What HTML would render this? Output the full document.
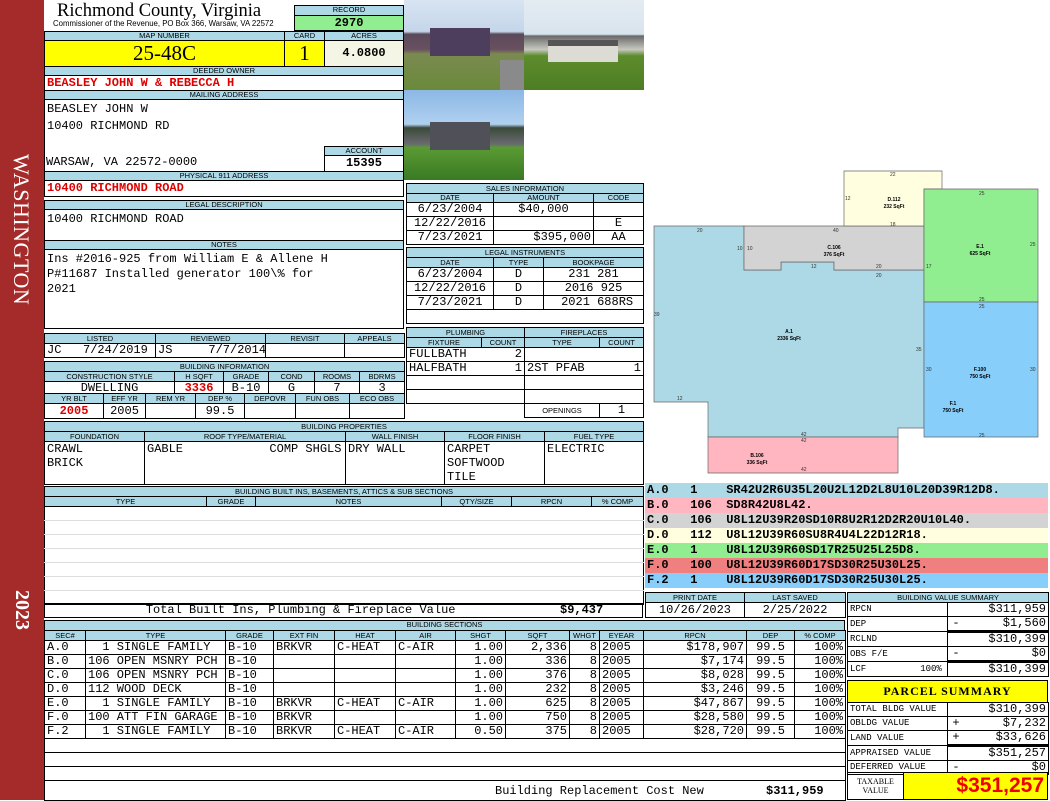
<!DOCTYPE html>
<html><head><meta charset="utf-8"><style>
*{margin:0;padding:0}
body{width:1050px;height:800px;position:relative;background:#fff;overflow:hidden;font-family:"Liberation Mono",monospace}
div,table,svg{position:absolute;box-sizing:border-box}
table{border-collapse:collapse;table-layout:fixed}
td{border:1px solid #000;padding:0 2px;overflow:hidden;white-space:pre;font:12px/13px "Liberation Mono",monospace;vertical-align:middle}
td.h,.h{background:#add8e6;font:7.5px/8px "Liberation Sans",sans-serif;text-align:center;padding:0;border:1px solid #000}
.r{text-align:right}.c{text-align:center}
.red{color:#d00;font-weight:bold}
.b{font-weight:bold}
</style></head><body>
<div style="left:0;top:0;width:44px;height:800px;background:#a52a2a"></div>
<div style="left:8px;top:154px;writing-mode:vertical-rl;font:22px 'Liberation Serif',serif;color:#fff;letter-spacing:0.5px">WASHINGTON</div>
<div style="left:10px;top:590px;writing-mode:vertical-rl;font:bold 20px 'Liberation Serif',serif;color:#fff">2023</div>

<div style="left:57px;top:1px;font:18.5px/20px 'Liberation Serif',serif">Richmond County, Virginia</div>
<div style="left:53px;top:20px;font:7.8px/8px 'Liberation Sans',sans-serif">Commissioner of the Revenue, PO Box 366, Warsaw, VA 22572</div>
<div class="h" style="left:294px;top:5px;width:110px;height:11px">RECORD</div>
<div class="b" style="left:294px;top:15px;width:110px;height:16px;background:#90ee90;border:1px solid #000;font-size:12px;text-align:center;line-height:14px">2970</div>
<div class="h" style="left:44px;top:31px;width:241px;height:10px">MAP NUMBER</div>
<div class="h" style="left:284px;top:31px;width:41px;height:10px">CARD</div>
<div class="h" style="left:324px;top:31px;width:80px;height:10px">ACRES</div>
<div style="left:44px;top:40px;width:241px;height:27px;background:#ff0;border:1px solid #000;font:21px/25px 'Liberation Serif',serif;text-align:center">25-48C</div>
<div style="left:284px;top:40px;width:41px;height:27px;background:#ff0;border:1px solid #000;font:21px/25px 'Liberation Serif',serif;text-align:center">1</div>
<div class="b" style="left:324px;top:40px;width:80px;height:27px;background:#f5f5e6;border:1px solid #000;font-size:12px;line-height:25px;text-align:center">4.0800</div>
<div class="h" style="left:44px;top:66px;width:360px;height:10px">DEEDED OWNER</div>
<div class="red" style="left:44px;top:75px;width:360px;height:16px;border:1px solid #000;font-size:12px;line-height:14px;padding-left:2px">BEASLEY JOHN W &amp; REBECCA H</div>
<div class="h" style="left:44px;top:90px;width:360px;height:10px">MAILING ADDRESS</div>
<div style="left:44px;top:99px;width:360px;height:73px;border:1px solid #000;font-size:12px;line-height:17px;padding:1px 2px;white-space:pre">BEASLEY JOHN W
10400 RICHMOND RD</div>
<div style="left:46px;top:155px;font-size:12px;line-height:14px">WARSAW, VA 22572-0000</div>
<div class="h" style="left:324px;top:146px;width:80px;height:10px">ACCOUNT</div>
<div class="b" style="left:324px;top:155px;width:80px;height:17px;border:1px solid #000;font-size:12px;line-height:15px;text-align:center">15395</div>
<div class="h" style="left:44px;top:171px;width:360px;height:10px">PHYSICAL 911 ADDRESS</div>
<div class="red" style="left:44px;top:180px;width:360px;height:17px;border:1px solid #000;font-size:12px;line-height:15px;padding-left:2px">10400 RICHMOND ROAD</div>

<div class="h" style="left:44px;top:200px;width:360px;height:10px">LEGAL DESCRIPTION</div>
<div style="left:44px;top:209px;width:360px;height:32px;border:1px solid #000;font-size:12px;line-height:15px;padding:2px">10400 RICHMOND ROAD</div>
<div class="h" style="left:44px;top:240px;width:360px;height:10px">NOTES</div>
<div style="left:44px;top:249px;width:360px;height:80px;border:1px solid #000;font-size:12px;line-height:15px;padding:2px;white-space:pre">Ins #2016-925 from William E &amp; Allene H
P#11687 Installed generator 100\% for
2021</div>

<div style="left:404px;top:0;width:120px;height:90px;background:linear-gradient(#d8e4f2 0,#c4d6ea 35%,#5a4a5a 38%,#6a5060 55%,#7a8a50 60%,#6a8a3a 100%)"></div>
<div style="left:430px;top:28px;width:60px;height:28px;background:#4e3e5e"></div>
<div style="left:500px;top:60px;width:24px;height:30px;background:#8a8a8a"></div>
<div style="left:524px;top:0;width:120px;height:90px;background:linear-gradient(#e4ecf2 0,#d8e4ee 38%,#6a6a6a 40%,#c8c8c0 55%,#5c8c2c 62%,#4e7e24 100%)"></div>
<div style="left:548px;top:40px;width:70px;height:22px;background:#dcdcd4;border-top:6px solid #555"></div>
<div style="left:404px;top:90px;width:120px;height:90px;background:linear-gradient(#8cb8e4 0,#b0d0f0 38%,#3a4a3a 42%,#6a6a70 60%,#5a9a34 64%,#3a7a24 100%)"></div>
<div style="left:430px;top:122px;width:60px;height:28px;background:#505058"></div>

<table style="left:406px;top:183px;width:237px"><colgroup><col width="87"><col width="100"><col width="50"></colgroup>
<tr style="height:10px"><td class="h" colspan="3">SALES INFORMATION</td></tr>
<tr style="height:9px"><td class="h">DATE</td><td class="h">AMOUNT</td><td class="h">CODE</td></tr>
<tr style="height:14px"><td class="c">6/23/2004</td><td class="c">$40,000</td><td></td></tr>
<tr style="height:14px"><td class="c">12/22/2016</td><td></td><td class="c">E</td></tr>
<tr style="height:14px"><td class="c">7/23/2021</td><td class="r">$395,000</td><td class="c">AA</td></tr>
</table>
<table style="left:406px;top:247px;width:237px"><colgroup><col width="87"><col width="50"><col width="100"></colgroup>
<tr style="height:10px"><td class="h" colspan="3">LEGAL INSTRUMENTS</td></tr>
<tr style="height:10px"><td class="h">DATE</td><td class="h">TYPE</td><td class="h">BOOKPAGE</td></tr>
<tr style="height:14px"><td class="c">6/23/2004</td><td class="c">D</td><td class="c">231 281</td></tr>
<tr style="height:14px"><td class="c">12/22/2016</td><td class="c">D</td><td class="c">2016 925</td></tr>
<tr style="height:14px"><td class="c">7/23/2021</td><td class="c">D</td><td class="c"> 2021 688RS</td></tr>
<tr style="height:14px"><td colspan="3"></td></tr>
</table>
<table style="left:406px;top:327px;width:237px"><colgroup><col width="75"><col width="43"><col width="75"><col width="44"></colgroup>
<tr style="height:10px"><td class="h" colspan="2">PLUMBING</td><td class="h" colspan="2">FIREPLACES</td></tr>
<tr style="height:10px"><td class="h">FIXTURE</td><td class="h">COUNT</td><td class="h">TYPE</td><td class="h">COUNT</td></tr>
<tr style="height:14px"><td style="border-right:0">FULLBATH</td><td class="r" style="border-left:0">2</td><td colspan="2"></td></tr>
<tr style="height:14px"><td style="border-right:0">HALFBATH</td><td class="r" style="border-left:0">1</td><td style="border-right:0">2ST PFAB</td><td class="r" style="border-left:0">1</td></tr>
<tr style="height:14px"><td colspan="2"></td><td colspan="2"></td></tr>
<tr style="height:14px"><td colspan="2"></td><td colspan="2"></td></tr>
<tr style="height:13px"><td colspan="2" style="border:0;border-top:1px solid #000"></td><td class="c" style="font:7.5px 'Liberation Sans',sans-serif">OPENINGS</td><td class="c">1</td></tr>
</table>

<table style="left:44px;top:333px;width:360px"><colgroup><col width="111"><col width="110"><col width="79"><col width="60"></colgroup>
<tr style="height:10px"><td class="h">LISTED</td><td class="h">REVIEWED</td><td class="h">REVISIT</td><td class="h">APPEALS</td></tr>
<tr style="height:14px"><td>JC   7/24/2019</td><td>JS     7/7/2014</td><td></td><td></td></tr>
</table>
<table style="left:44px;top:361px;width:360px"><colgroup><col width="130"><col width="49"><col width="45"><col width="46"><col width="45"><col width="45"></colgroup>
<tr style="height:10px"><td class="h" colspan="6">BUILDING INFORMATION</td></tr>
<tr style="height:10px"><td class="h">CONSTRUCTION STYLE</td><td class="h">H SQFT</td><td class="h">GRADE</td><td class="h">COND</td><td class="h">ROOMS</td><td class="h">BDRMS</td></tr>
<tr style="height:13px"><td class="c">DWELLING</td><td class="c red">3336</td><td class="c">B-10</td><td class="c">G</td><td class="c">7</td><td class="c">3</td></tr>
</table>
<table style="left:44px;top:393px;width:360px"><colgroup><col width="59"><col width="42"><col width="50"><col width="49"><col width="51"><col width="54"><col width="55"></colgroup>
<tr style="height:10px"><td class="h">YR BLT</td><td class="h">EFF YR</td><td class="h">REM YR</td><td class="h">DEP %</td><td class="h">DEPOVR</td><td class="h">FUN OBS</td><td class="h">ECO OBS</td></tr>
<tr style="height:15px"><td class="c red">2005</td><td class="c">2005</td><td></td><td class="c">99.5</td><td></td><td></td><td></td></tr>
</table>

<table style="left:44px;top:421px;width:599px"><colgroup><col width="100"><col width="201"><col width="99"><col width="100"><col width="99"></colgroup>
<tr style="height:10px"><td class="h" colspan="5">BUILDING PROPERTIES</td></tr>
<tr style="height:10px"><td class="h">FOUNDATION</td><td class="h">ROOF TYPE/MATERIAL</td><td class="h">WALL FINISH</td><td class="h">FLOOR FINISH</td><td class="h">FUEL TYPE</td></tr>
<tr style="height:43px"><td style="vertical-align:top;line-height:14px">CRAWL
BRICK</td><td style="vertical-align:top;line-height:14px">GABLE            COMP SHGLS</td><td style="vertical-align:top;line-height:14px">DRY WALL</td><td style="vertical-align:top;line-height:14px">CARPET
SOFTWOOD
TILE</td><td style="vertical-align:top;line-height:14px">ELECTRIC</td></tr>
</table>

<table style="left:44px;top:486px;width:599px"><colgroup><col width="162"><col width="49"><col width="186"><col width="70"><col width="80"><col width="52"></colgroup>
<tr style="height:10px"><td class="h" colspan="6">BUILDING BUILT INS, BASEMENTS, ATTICS &amp; SUB SECTIONS</td></tr>
<tr style="height:10px"><td class="h">TYPE</td><td class="h">GRADE</td><td class="h">NOTES</td><td class="h">QTY/SIZE</td><td class="h">RPCN</td><td class="h">% COMP</td></tr>
<tr style="height:14px"><td colspan="6" style="border-top:0;border-bottom:1px solid #ddd"></td></tr>
<tr style="height:14px"><td colspan="6" style="border-top:0;border-bottom:1px solid #ddd"></td></tr>
<tr style="height:14px"><td colspan="6" style="border-top:0;border-bottom:1px solid #ddd"></td></tr>
<tr style="height:14px"><td colspan="6" style="border-top:0;border-bottom:1px solid #ddd"></td></tr>
<tr style="height:14px"><td colspan="6" style="border-top:0;border-bottom:1px solid #ddd"></td></tr>
<tr style="height:14px"><td colspan="6" style="border-top:0;border-bottom:1px solid #ddd"></td></tr>
<tr style="height:14px"><td colspan="6" style="border-top:0"></td></tr>
</table>
<div style="left:44px;top:603px;width:599px;height:15px;border:1px solid #000;font-size:12px;line-height:13px;white-space:pre">              Total Built Ins, Plumbing &amp; Fireplace Value</div>
<div class="b" style="left:560px;top:604px;font-size:12px;line-height:13px">$9,437</div>

<div class="h" style="left:44px;top:620px;width:801px;height:11px">BUILDING SECTIONS</div>
<table style="left:44px;top:630px;width:801px"><colgroup><col width="41"><col width="140"><col width="48"><col width="61"><col width="61"><col width="60"><col width="50"><col width="64"><col width="30"><col width="44"><col width="103"><col width="48"><col width="51"></colgroup>
<tr style="height:10px"><td class="h">SEC#</td><td class="h">TYPE</td><td class="h">GRADE</td><td class="h">EXT FIN</td><td class="h">HEAT</td><td class="h">AIR</td><td class="h">SHGT</td><td class="h">SQFT</td><td class="h">WHGT</td><td class="h">EYEAR</td><td class="h">RPCN</td><td class="h">DEP</td><td class="h">% COMP</td></tr>
<tr style="height:14px"><td>A.0</td><td>  1 SINGLE FAMILY</td><td>B-10</td><td>BRKVR</td><td>C-HEAT</td><td>C-AIR</td><td class="r">1.00</td><td class="r">2,336</td><td class="r">8</td><td>2005</td><td class="r">$178,907</td><td class="c">99.5</td><td class="r">100%</td></tr>
<tr style="height:14px"><td>B.0</td><td>106 OPEN MSNRY PCH</td><td>B-10</td><td></td><td></td><td></td><td class="r">1.00</td><td class="r">336</td><td class="r">8</td><td>2005</td><td class="r">$7,174</td><td class="c">99.5</td><td class="r">100%</td></tr>
<tr style="height:14px"><td>C.0</td><td>106 OPEN MSNRY PCH</td><td>B-10</td><td></td><td></td><td></td><td class="r">1.00</td><td class="r">376</td><td class="r">8</td><td>2005</td><td class="r">$8,028</td><td class="c">99.5</td><td class="r">100%</td></tr>
<tr style="height:14px"><td>D.0</td><td>112 WOOD DECK</td><td>B-10</td><td></td><td></td><td></td><td class="r">1.00</td><td class="r">232</td><td class="r">8</td><td>2005</td><td class="r">$3,246</td><td class="c">99.5</td><td class="r">100%</td></tr>
<tr style="height:14px"><td>E.0</td><td>  1 SINGLE FAMILY</td><td>B-10</td><td>BRKVR</td><td>C-HEAT</td><td>C-AIR</td><td class="r">1.00</td><td class="r">625</td><td class="r">8</td><td>2005</td><td class="r">$47,867</td><td class="c">99.5</td><td class="r">100%</td></tr>
<tr style="height:14px"><td>F.0</td><td>100 ATT FIN GARAGE</td><td>B-10</td><td>BRKVR</td><td></td><td></td><td class="r">1.00</td><td class="r">750</td><td class="r">8</td><td>2005</td><td class="r">$28,580</td><td class="c">99.5</td><td class="r">100%</td></tr>
<tr style="height:14px"><td>F.2</td><td>  1 SINGLE FAMILY</td><td>B-10</td><td>BRKVR</td><td>C-HEAT</td><td>C-AIR</td><td class="r">0.50</td><td class="r">375</td><td class="r">8</td><td>2005</td><td class="r">$28,720</td><td class="c">99.5</td><td class="r">100%</td></tr>
<tr style="height:14px"><td colspan="13"></td></tr>
<tr style="height:14px"><td colspan="13"></td></tr>
<tr style="height:14px"><td colspan="13"></td></tr>
<tr style="height:20px"><td colspan="13"></td></tr>
</table>
<div style="left:495px;top:784px;font-size:12px;line-height:14px;white-space:pre">Building Replacement Cost New</div>
<div class="b" style="left:766px;top:784px;font-size:12px;line-height:14px">$311,959</div>

<svg style="left:0;top:0" width="1050" height="800" viewBox="0 0 1050 800" font-family="Liberation Sans,sans-serif">
<g stroke="#666" stroke-width="0.7">
<polygon fill="#add8e6" points="654,226 744,226 744,270 781,270 781,262 834,262 834,270 924,270 924,428 898,428 898,437 708,437 708,402 654,402"/>
<polygon fill="#d3d3d3" points="744,226 924,226 924,270 834,270 834,262 781,262 781,270 744,270"/>
<polygon fill="#ffffe0" points="844,171 942,171 942,189 924,189 924,226 844,226"/>
<polygon fill="#90ee90" points="924,189 1038,189 1038,302 924,302"/>
<polygon fill="#87cefa" points="924,302 1038,302 1038,437 924,437"/>
<polygon fill="#ffb6c1" points="708,437 898,437 898,473 708,473"/>
</g>
<g font-size="5" font-weight="bold" text-anchor="middle">
<text x="789" y="333">A.1</text><text x="789" y="340">2336 SqFt</text>
<text x="834" y="249">C.106</text><text x="834" y="256">376 SqFt</text>
<text x="894" y="201">D.112</text><text x="894" y="208">232 SqFt</text>
<text x="980" y="248">E.1</text><text x="980" y="255">625 SqFt</text>
<text x="980" y="371">F.100</text><text x="980" y="378">750 SqFt</text>
<text x="953" y="405">F.1</text><text x="953" y="412">750 SqFt</text>
<text x="757" y="457">B.106</text><text x="757" y="464">336 SqFt</text>
</g>
<g font-size="5" fill="#333">
<text x="697" y="232">20</text><text x="833" y="232">40</text><text x="890" y="176">22</text><text x="890" y="226">18</text>
<text x="845" y="200">12</text><text x="979" y="195">25</text><text x="979" y="301">25</text><text x="979" y="308">25</text><text x="979" y="437">25</text>
<text x="1030" y="246">25</text><text x="926" y="268">17</text><text x="654" y="316">39</text><text x="916" y="351">35</text>
<text x="926" y="371">30</text><text x="1030" y="371">30</text><text x="677" y="400">12</text><text x="801" y="436">42</text><text x="801" y="442">42</text><text x="801" y="471">42</text>
<text x="811" y="268">12</text><text x="876" y="268">20</text><text x="876" y="277">20</text><text x="737" y="250">10</text><text x="747" y="250">10</text>
</g>
</svg>

<div style="left:645px;top:483px;width:403px;height:106px;font:bold 12px/15px 'Liberation Mono',monospace;white-space:pre">
<div style="left:0;top:0;width:403px;height:15px;background:#add8e6;padding-left:2px">A.0   1    SR42U2R6U35L20U2L12D2L8U10L20D39R12D8.</div>
<div style="left:0;top:15px;width:403px;height:15px;background:#ffb6c1;padding-left:2px">B.0   106  SD8R42U8L42.</div>
<div style="left:0;top:30px;width:403px;height:15px;background:#d3d3d3;padding-left:2px">C.0   106  U8L12U39R20SD10R8U2R12D2R20U10L40.</div>
<div style="left:0;top:45px;width:403px;height:15px;background:#ffffe0;padding-left:2px">D.0   112  U8L12U39R60SU8R4U4L22D12R18.</div>
<div style="left:0;top:60px;width:403px;height:15px;background:#90ee90;padding-left:2px">E.0   1    U8L12U39R60SD17R25U25L25D8.</div>
<div style="left:0;top:75px;width:403px;height:15px;background:#f08080;padding-left:2px">F.0   100  U8L12U39R60D17SD30R25U30L25.</div>
<div style="left:0;top:90px;width:403px;height:15px;background:#87cefa;padding-left:2px">F.2   1    U8L12U39R60D17SD30R25U30L25.</div>
</div>

<table style="left:645px;top:592px;width:200px"><colgroup><col width="99"><col width="101"></colgroup>
<tr style="height:10px"><td class="h">PRINT DATE</td><td class="h">LAST SAVED</td></tr>
<tr style="height:15px"><td class="c">10/26/2023</td><td class="c">2/25/2022</td></tr>
</table>

<table style="left:847px;top:592px;width:201px"><colgroup><col width="100"><col width="101"></colgroup>
<tr style="height:10px"><td class="h" colspan="2">BUILDING VALUE SUMMARY</td></tr>
<tr style="height:14px"><td style="font-size:9px">RPCN</td><td class="r">$311,959</td></tr>
<tr style="height:14px"><td style="font-size:9px">DEP</td><td class="r" style="border-bottom:3px solid #000">-      $1,560</td></tr>
<tr style="height:14px"><td style="font-size:9px">RCLND</td><td class="r">$310,399</td></tr>
<tr style="height:14px"><td style="font-size:9px">OBS F/E</td><td class="r" style="border-bottom:3px solid #000">-          $0</td></tr>
<tr style="height:14px"><td style="font-size:9px">LCF          100%</td><td class="r">$310,399</td></tr>
</table>
<div style="left:847px;top:680px;width:201px;height:23px;background:#ff0;border:1px solid #000;font:bold 12px/21px 'Liberation Serif',serif;text-align:center;letter-spacing:1px">PARCEL SUMMARY</div>
<table style="left:847px;top:702px;width:201px"><colgroup><col width="100"><col width="101"></colgroup>
<tr style="height:14px"><td style="font-size:9px">TOTAL BLDG VALUE</td><td class="r">$310,399</td></tr>
<tr style="height:14px"><td style="font-size:9px">OBLDG VALUE</td><td class="r">+      $7,232</td></tr>
<tr style="height:14px"><td style="font-size:9px">LAND VALUE</td><td class="r" style="border-bottom:3px solid #000">+     $33,626</td></tr>
<tr style="height:14px"><td style="font-size:9px">APPRAISED VALUE</td><td class="r">$351,257</td></tr>
<tr style="height:14px"><td style="font-size:9px">DEFERRED VALUE</td><td class="r">-          $0</td></tr>
</table>
<div style="left:847px;top:772px;width:57px;height:28px;border:1px solid #000;font:8px/9px 'Liberation Serif',serif;text-align:center;padding-top:4px">TAXABLE<br>VALUE</div>
<div style="left:903px;top:772px;width:145px;height:28px;background:#ff0;border:1px solid #000;color:#e00;font:bold 21px/26px 'Liberation Sans',sans-serif;text-align:right;padding-right:3px">$351,257</div>
</body></html>
